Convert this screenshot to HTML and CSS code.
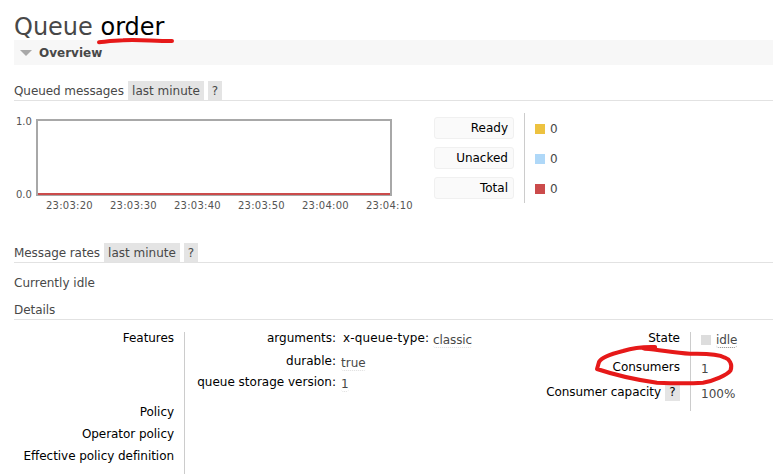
FILE: index.html
```html
<!DOCTYPE html>
<html lang="en">
<head>
<meta charset="utf-8">
<title>Queue order</title>
<link rel="stylesheet" href="styles.css">
</head>
<body>
<main>
  <h1>Queue <b>order</b></h1>
  <h2><span class="arrow"></span>Overview</h2>
  <div class="heading queued"><span class="htext">Queued messages</span><span class="tag period">last minute</span><span class="tag help">?</span></div>
  <div class="stats">
    <div class="ylabels"><span>1.0</span><span>0.0</span></div>
    <div class="chart">
      <div class="plot"></div>
      <div class="xlabels"><span>23:03:20</span><span>23:03:30</span><span>23:03:40</span><span>23:03:50</span><span>23:04:00</span><span>23:04:10</span></div>
    </div>
    <div class="legend"><span>Ready</span><span>Unacked</span><span>Total</span></div>
    <div class="counts">
      <div><i class="swatch ready"></i>0</div>
      <div><i class="swatch unacked"></i>0</div>
      <div><i class="swatch total"></i>0</div>
    </div>
  </div>
  <div class="heading rates"><span class="htext">Message rates</span><span class="tag period">last minute</span><span class="tag help">?</span></div>
  <p class="idle">Currently idle</p>
  <div class="heading details">Details</div>
  <div class="facts">
    <div class="labels">
      <span class="features">Features</span><span>Policy</span><span>Operator policy</span><span class="effective">Effective policy definition</span>
    </div>
    <div class="features-table">
      <div class="row r1"><span class="key">arguments:</span><span class="sub">x-queue-type:</span><span class="val">classic</span></div>
      <div class="row r2"><span class="key">durable:</span><span class="val">true</span></div>
      <div class="row r3"><span class="key qsv">queue storage version:</span><span class="val">1</span></div>
    </div>
    <div class="state-labels">
      <span class="state">State</span><span class="consumers">Consumers</span><span class="capacity"><span class="captext">Consumer capacity</span><span class="tag help">?</span></span>
    </div>
    <div class="state-values">
      <div class="state"><i class="swatch"></i><span class="abbr">idle</span></div>
      <div class="consumers">1</div>
      <div class="percent">100%</div>
    </div>
  </div>
</main>
<svg class="marks" width="773" height="474" viewBox="0 0 773 474">
  <path d="M99 42.300C107 41.500 114 40.500 123 40.300C140 39.500 152 41 172 41" stroke-width="4"/>
  <path d="M644 348.300L655 348.300" stroke-width="4.500"/>
  <path d="M655 347C640 346.500 631 348.500 623 351C611 354 601 358 599 362L597 369C612 374 637 380 657 382.700C674 383.500 692 383.500 703 382.700C714 381 727 375 730.500 370.500C733 364 729 359 725 357.700C716 353 702 354 690 353.700C674 353 662 350 645 348.500" stroke-width="4"/>
</svg>
</body>
</html>
```
FILE: styles.css
```css
* { box-sizing: border-box; }
body {
  margin: 0;
  width: 773px;
  height: 474px;
  overflow: hidden;
  position: relative;
  background: #fff;
  color: #484848;
  font: 12px/20px Verdana, "DejaVu Sans", sans-serif;
}
main { padding-left: 14px; }
h1 { margin: 0; height: 40px; padding-top: 12px; font-size: 24px; font-weight: 400; line-height: 30px; white-space: nowrap; }
h1 b { font-weight: 400; color: #000; }
h2 { margin: 0; height: 25px; background: #f7f7f7; display: flex; align-items: center; padding-left: 6px; font-size: 12px; font-weight: 700; }
.arrow { border: 6px solid transparent; border-top: 6px solid #a8a8a8; border-bottom: 0; margin-right: 7px; }
.heading { border-bottom: 1px solid #e2e2e2; display: flex; white-space: nowrap; }
.queued { margin-top: 16px; height: 20px; }
.htext { width: 110px; letter-spacing: -0.08px; }
.tag { background: #e4e4e4; height: 19px; text-align: center; }
.period { width: 76px; margin-left: 4px; }
.help { width: 14px; margin-left: 4px; }
.stats { display: flex; height: 142px; padding-top: 12px; }
.ylabels { width: 22px; display: flex; flex-direction: column; gap: 61px; padding-top: 3px; font-size: 10px; line-height: 12px; color: #545454; }
.ylabels span { padding-left: 2px; }
.chart { width: 356px; padding-top: 6px; }
.plot { height: 77px; border: 2px solid #a8a8a8; border-bottom-width: 1px; background: linear-gradient(#cb4b4b, #cb4b4b) bottom / 100% 2px no-repeat; }
.xlabels { display: flex; margin: 4px 0 0 10px; font-size: 10px; line-height: 12px; letter-spacing: .25px; color: #545454; }
.xlabels span { width: 64px; flex: none; }
.legend { width: 80px; margin-left: 42px; padding-top: 4px; display: flex; flex-direction: column; gap: 8px; color: #000; }
.legend span { height: 22px; border: 1px solid #f0f0f0; border-radius: 3px; background: #fafafa; text-align: right; padding-right: 5px; line-height: 20px; }
.counts { height: 90px; margin-left: 10px; border-left: 1px solid #ccc; padding-left: 10px; }
.counts div { height: 30px; display: flex; align-items: center; padding-top: 2px; }
.swatch { width: 10px; height: 10px; margin-right: 5px; background: #ddd; }
.ready { background: #edc240; }
.unacked { background: #afd8f8; }
.total { background: #cb4b4b; }
.rates { height: 20px; }
.rates .htext { width: 86px; }
.idle { margin: 10px 0 0; }
.details { margin-top: 7px; height: 20px; letter-spacing: -.05px; }
.facts { display: flex; height: 154px; padding-top: 12px; white-space: nowrap; }
.labels { width: 160px; height: 142px; text-align: right; color: #000; display: flex; flex-direction: column; line-height: 22px; letter-spacing: -.05px; }
.labels .features { height: 69px; line-height: 12px; }
.features-table { width: 362px; margin-left: 10px; border-left: 1px solid #ccc; }
.row { display: flex; line-height: 12px; }
.r1 { height: 23px; }
.r2 { height: 21px; }
.key { width: 151px; text-align: right; color: #000; }
.sub { color: #000; margin-left: 7px; width: 86px; letter-spacing: .15px; }
.val { margin: 2px 0 0 5px; height: 14px; border-bottom: 1px dotted #ddd; border-radius: 3px; }
.sub + .val { margin-left: 4px; letter-spacing: -.1px; }
.state-labels { width: 134px; text-align: right; color: #000; display: flex; flex-direction: column; line-height: 12px; }
.state-labels .state { height: 29px; }
.state-labels .consumers { height: 22px; }
.capacity { display: flex; justify-content: flex-end; line-height: 18px; }
.capacity .help { width: 15px; height: 18px; }
.captext { letter-spacing: -.05px; }
.state-values { height: 79px; margin-left: 10px; border-left: 1px solid #ccc; padding: 1px 0 0 10px; line-height: 12px; }
.state-values .state { display: flex; align-items: center; height: 13px; }
.abbr { height: 15px; line-height: 14px; margin-top: 1px; border-bottom: 1px dotted #888; border-radius: 3px; letter-spacing: -.1px; }
.state-values .consumers { margin-top: 17px; }
.percent { margin-top: 13px; }
.marks { position: absolute; left: 0; top: 0; fill: none; stroke: #e61919; stroke-linecap: round; stroke-linejoin: round; }
```
